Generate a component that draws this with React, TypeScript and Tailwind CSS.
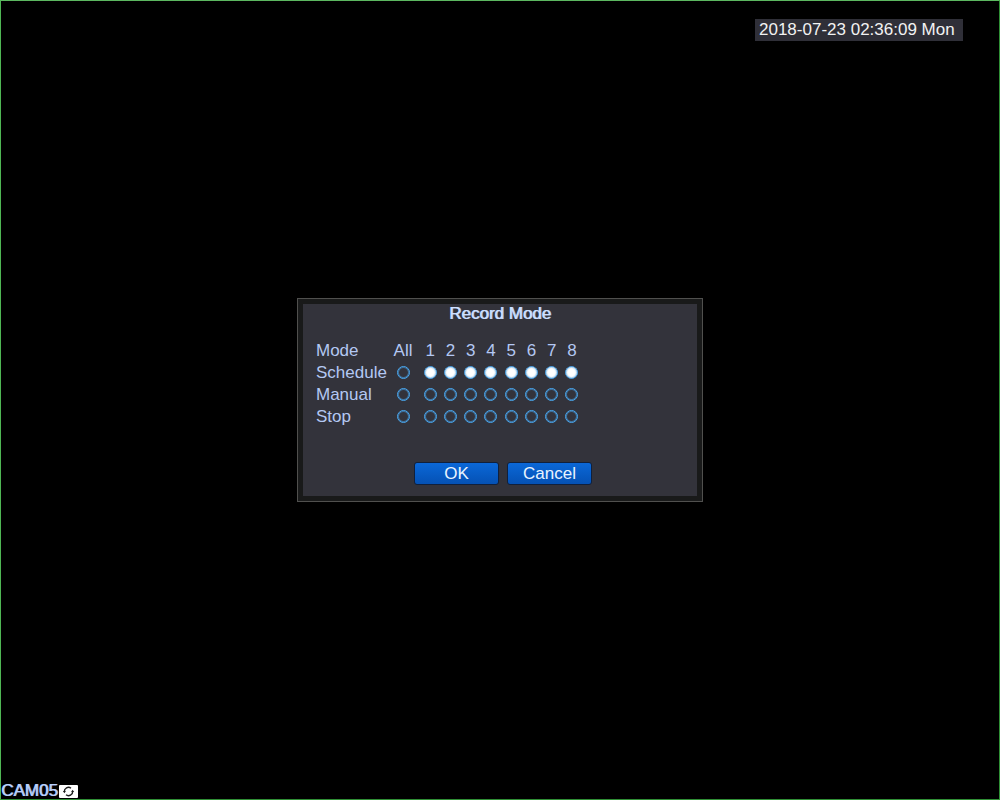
import { useState } from 'react';

const channels = [1, 2, 3, 4, 5, 6, 7, 8];
const modes = ['Schedule', 'Manual', 'Stop'];

const radioClass =
  'block mx-auto size-[13px] appearance-none rounded-full border border-[#4aa8f0] shadow-[inset_0_0_0_1px_rgba(74,168,240,0.55)] checked:bg-white checked:border-[#3f9ae0] checked:shadow-[inset_0_0_1px_1px_rgba(63,147,210,0.4)]';

const buttonClass =
  'h-[23px] w-[85px] rounded-[3px] border border-[#10203c] bg-linear-to-b from-[#0b68d8] to-[#0551b4] text-center leading-[21px] text-[#e8f4ff]';

function CycleIcon() {
  return (
    <svg width="19" height="13" viewBox="0 0 19 13" aria-hidden="true">
      <rect width="19" height="13" rx="1" fill="#fff" />
      <g fill="none" stroke="#1c1c1c" strokeWidth="1.4">
        <path d="M5.3 6.8A4.2 4.2 0 0 1 12 3.2" />
        <path d="M13.7 6.2A4.2 4.2 0 0 1 7 9.8" />
      </g>
      <path d="M3.9 6L6.9 6L5.4 8.2Z" fill="#1c1c1c" />
      <path d="M15.1 7L12.1 7L13.6 4.8Z" fill="#1c1c1c" />
    </svg>
  );
}

function RecordModeDialog() {
  const [selected, setSelected] = useState<string[]>(channels.map(() => 'Schedule'));
  const [all, setAll] = useState('');

  const selectAll = (mode: string) => {
    setAll(mode);
    setSelected(channels.map(() => mode));
  };

  const select = (index: number, mode: string) => {
    setAll('');
    setSelected((s) => s.map((m, i) => (i === index ? mode : m)));
  };

  return (
    <form
      role="dialog"
      aria-labelledby="dialog-title"
      onSubmit={(e) => e.preventDefault()}
      className="w-[406px] max-w-full border border-[#50504e] bg-[#191a1a] p-[5px]"
    >
      <div className="bg-[#33333b] pb-[11px]">
        <h1
          id="dialog-title"
          className="text-center text-[17px] leading-[20px] text-[#cfe0ff] [text-shadow:1px_0_0_#b4c8ee]"
        >
          Record Mode
        </h1>

        <table className="mt-4 ml-[13px] w-[266px] table-fixed text-[#b3c8f3]">
          <thead>
            <tr className="h-[22px]">
              <th scope="col" className="w-[70px] text-left font-normal">Mode</th>
              <th scope="col" className="w-[34px] font-normal">All</th>
              {channels.map((ch) => (
                <th key={ch} scope="col" className="font-normal">{ch}</th>
              ))}
            </tr>
          </thead>
          <tbody>
            {modes.map((mode) => (
              <tr key={mode} className="h-[22px]">
                <th scope="row" className="text-left font-normal whitespace-nowrap">{mode}</th>
                <td className="pt-1 align-top">
                  <input
                    type="radio"
                    name="all"
                    aria-label={`${mode} all`}
                    checked={all === mode}
                    onChange={() => selectAll(mode)}
                    className={radioClass}
                  />
                </td>
                {channels.map((ch, i) => (
                  <td key={ch} className="pt-1 align-top">
                    <input
                      type="radio"
                      name={`channel-${ch}`}
                      aria-label={`${mode} channel ${ch}`}
                      checked={selected[i] === mode}
                      onChange={() => select(i, mode)}
                      className={radioClass}
                    />
                  </td>
                ))}
              </tr>
            ))}
          </tbody>
        </table>

        <div className="mt-[34px] flex justify-center gap-2 pl-1.5">
          <button type="submit" className={buttonClass}>OK</button>
          <button type="button" className={buttonClass}>Cancel</button>
        </div>
      </div>
    </form>
  );
}

export default function App() {
  return (
    <main className="grid min-h-screen grid-rows-[1fr_auto_1fr] border border-t-[#5cb860] border-r-[#2f8f35] border-b-[#2f8f35] border-l-[#4fb654] bg-black font-['Liberation_Sans',Arial,sans-serif] text-[17px] leading-[22px]">
      <header className="flex items-start justify-end pt-[18px] pr-9">
        <time dateTime="2018-07-23T02:36:09" className="w-[208px] bg-[#2f2f38] px-1 text-[#f2f2f2]">
          2018-07-23 02:36:09 Mon
        </time>
      </header>

      <div className="flex justify-center">
        <RecordModeDialog />
      </div>

      {/* Channel label */}
      <footer className="flex items-end">
        <div className="flex h-4 items-center gap-px">
          <span className="leading-4 text-[#b9d0fb] [text-shadow:1px_0_0_#a3bbea]">CAM05</span>
          <CycleIcon />
        </div>
      </footer>
    </main>
  );
}
